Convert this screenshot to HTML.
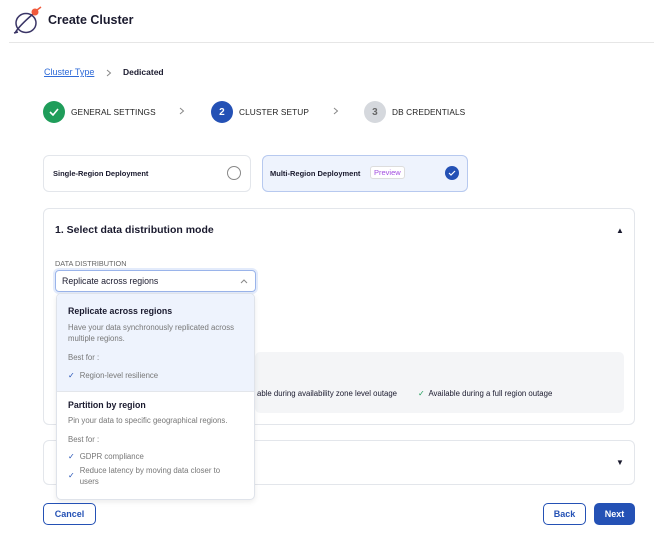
<!DOCTYPE html>
<html><head><style>
*{box-sizing:border-box;margin:0;padding:0}
body{width:654px;height:546px;background:#fff;font-family:"Liberation Sans",sans-serif;color:#1a1a2e;position:relative;overflow:hidden}
.abs{position:absolute}
.step{position:absolute;top:101px;height:22px;display:flex;align-items:center;font-size:8.3px;color:#222;letter-spacing:.1px}
.circ{width:22px;height:22px;border-radius:50%;display:flex;align-items:center;justify-content:center;color:#fff;font-size:10px;font-weight:bold;margin-right:6px}
.chev{position:absolute;top:107px}
.card{position:absolute;border:1px solid #e3e6eb;border-radius:6px;background:#fff}
.btn{position:absolute;border:1px solid #2451b5;border-radius:5px;font-size:9px;font-weight:bold;color:#2451b5;display:flex;align-items:center;justify-content:center}
.chk{color:#2451b5;font-size:8px;margin-right:5px}
.g{color:#777;font-size:7.8px}
</style></head><body>
<svg class="abs" style="left:11px;top:6px" width="32" height="30" viewBox="0 0 32 30">
<ellipse cx="15" cy="17" rx="10" ry="9.5" fill="none" stroke="#3a3566" stroke-width="1.5"/>
<path d="M4 27 Q8 20 22 8" stroke="#3a3566" stroke-width="1.5" fill="none"/>
<path d="M3 27 L7 26" stroke="#3a3566" stroke-width="1.5"/>
<circle cx="24" cy="6" r="3.5" fill="#f05a3c"/>
<path d="M26 4 L30 1" stroke="#f05a3c" stroke-width="1.5"/>
</svg>
<div class="abs" style="left:48px;top:13px;font-size:12.5px;font-weight:bold">Create Cluster</div>
<div class="abs" style="left:9px;top:42px;width:645px;height:1px;background:#e6e6e6"></div>
<div class="abs" style="left:44px;top:67px;font-size:9px;color:#2f6bd8;text-decoration:underline">Cluster Type</div>
<svg class="abs" style="left:106px;top:69px" width="6" height="8"><path d="M1 1 L4.5 4 L1 7" stroke="#888" fill="none"/></svg>
<div class="abs" style="left:123px;top:67px;font-size:8.5px;font-weight:bold">Dedicated</div>
<div class="step" style="left:43px"><div class="circ" style="background:#1f9d5a"><svg width="10" height="8"><path d="M1 4 L4 7 L9 1" stroke="#fff" stroke-width="1.6" fill="none"/></svg></div>GENERAL SETTINGS</div>
<svg class="chev" style="left:179px" width="6" height="8"><path d="M1 1 L4.5 4 L1 7" stroke="#888" fill="none"/></svg>
<div class="step" style="left:211px"><div class="circ" style="background:#2451b5">2</div>CLUSTER SETUP</div>
<svg class="chev" style="left:333px" width="6" height="8"><path d="M1 1 L4.5 4 L1 7" stroke="#888" fill="none"/></svg>
<div class="step" style="left:364px"><div class="circ" style="background:#d5d8dd;color:#666">3</div>DB CREDENTIALS</div>
<div class="card" style="left:43px;top:155px;width:208px;height:37px"></div>
<div class="abs" style="left:53px;top:169px;font-size:7.5px;font-weight:bold">Single-Region Deployment</div>
<div class="abs" style="left:227px;top:166px;width:14px;height:14px;border:1px solid #888;border-radius:50%"></div>
<div class="card" style="left:262px;top:155px;width:206px;height:37px;background:#eef3fd;border-color:#b7c9ef"></div>
<div class="abs" style="left:270px;top:169px;font-size:7.5px;font-weight:bold">Multi-Region Deployment</div>
<div class="abs" style="left:370px;top:166px;font-size:7.5px;color:#a24de0;border:1px solid #ddd;border-radius:3px;padding:1px 3px;background:#fff">Preview</div>
<div class="abs" style="left:445px;top:166px;width:14px;height:14px;background:#2451b5;border-radius:50%;text-align:center"><svg width="8" height="14" viewBox="0 0 8 14"><path d="M1 7 L3 9 L7 5" stroke="#fff" stroke-width="1.2" fill="none"/></svg></div>
<div class="card" style="left:43px;top:208px;width:592px;height:217px"></div>
<div class="abs" style="left:55px;top:224px;font-size:10.5px;font-weight:bold">1. Select data distribution mode</div>
<div class="abs" style="left:616px;top:226px;font-size:8px">▲</div>
<div class="abs" style="left:55px;top:259px;font-size:7.3px;color:#666">DATA DISTRIBUTION</div>
<div class="abs" style="left:55px;top:270px;width:201px;height:22px;border:1px solid #9ab4ea;border-radius:4px;font-size:8.8px;padding:5px 6px;box-shadow:0 0 0 2px #e3ebfb">Replicate across regions<svg style="position:absolute;right:7px;top:8px" width="8" height="5"><path d="M1 4 L4 1 L7 4" stroke="#888" fill="none"/></svg></div>
<div class="abs" style="left:255px;top:352px;width:369px;height:61px;background:#f4f5f7;border-radius:5px"></div>
<div class="abs" style="left:257px;top:389px;font-size:7.8px">able during availability zone level outage</div>
<div class="abs" style="left:418px;top:389px;font-size:7.8px"><span style="color:#1f9d5a">✓</span>&nbsp; Available during a full region outage</div>
<div class="card" style="left:43px;top:440px;width:592px;height:45px"></div>
<div class="abs" style="left:616px;top:458px;font-size:8px">▼</div>
<div class="abs" style="left:56px;top:293px;width:199px;height:207px;background:#fff;border:1px solid #dfe3ea;border-radius:5px;box-shadow:0 2px 6px rgba(0,0,0,.08);overflow:hidden">
 <div style="background:#eef3fd;height:98px;padding:12px 11px 0;border-bottom:1px solid #e3e6eb">
  <div style="font-size:8.8px;font-weight:bold">Replicate across regions</div>
  <div class="g" style="margin-top:6px;line-height:11px">Have your data synchronously replicated across multiple regions.</div>
  <div class="g" style="margin-top:9px">Best for :</div>
  <div class="g" style="margin-top:9px"><span class="chk">✓</span>Region-level resilience</div>
 </div>
 <div style="padding:8px 11px 0">
  <div style="font-size:8.8px;font-weight:bold">Partition by region</div>
  <div class="g" style="margin-top:6px">Pin your data to specific geographical regions.</div>
  <div class="g" style="margin-top:10px">Best for :</div>
  <div class="g" style="margin-top:8px"><span class="chk">✓</span>GDPR compliance</div>
  <div class="g" style="margin-top:4px;display:flex;line-height:11px;width:165px"><span class="chk" style="margin-top:5px">✓</span><span>Reduce latency by moving data closer to users</span></div>
 </div>
</div>
<div class="btn" style="left:43px;top:503px;width:53px;height:22px">Cancel</div>
<div class="btn" style="left:543px;top:503px;width:43px;height:22px">Back</div>
<div class="btn" style="left:594px;top:503px;width:41px;height:22px;background:#2451b5;color:#fff">Next</div>
</body></html>
